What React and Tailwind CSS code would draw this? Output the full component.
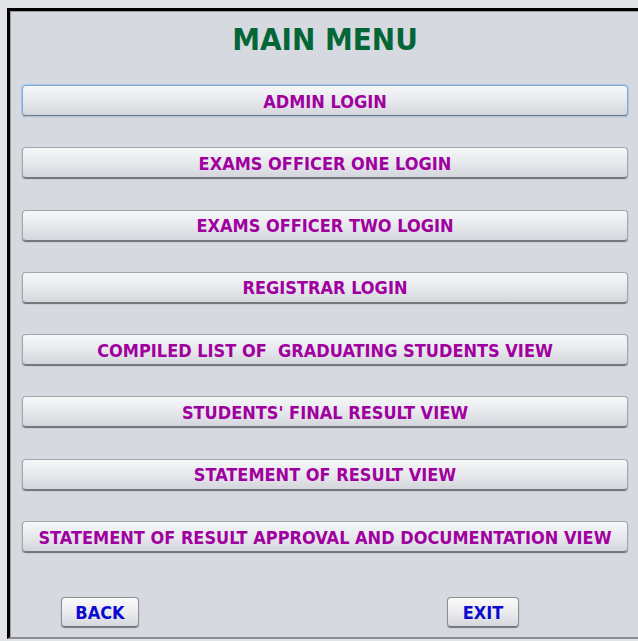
const menuItems = [
  'ADMIN LOGIN',
  'EXAMS OFFICER ONE LOGIN',
  'EXAMS OFFICER TWO LOGIN',
  'REGISTRAR LOGIN',
  'COMPILED LIST OF  GRADUATING STUDENTS VIEW',
  "STUDENTS' FINAL RESULT VIEW",
  'STATEMENT OF RESULT VIEW',
  'STATEMENT OF RESULT APPROVAL AND DOCUMENTATION VIEW',
];

const font = { fontFamily: '"DejaVu Sans Condensed", "DejaVu Sans", sans-serif' };

function MenuButton({ label, focused }) {
  return (
    <button
      className={`h-[31px] w-[606px] rounded-[4px] border border-b-[#75777b] bg-gradient-to-b from-[#f6f7f9] via-[#e8e9ed] to-[#d3d6dc] pt-[2px] text-[18px] leading-[20px] font-bold text-[#a0009f] shadow-[0_1px_1px_rgba(0,0,0,0.5)] whitespace-pre ${
        focused ? 'border-[#7fa9d8] ring-1 ring-[#a9c6e8]' : 'border-[#a4a6aa]'
      }`}
      style={font}
    >
      {label}
    </button>
  );
}

function SmallButton({ label, width }) {
  return (
    <button
      className={`h-[30px] ${width} rounded-[4px] border border-[#8d8f93] border-b-[#6f7175] bg-gradient-to-b from-[#fafafb] via-[#ececef] to-[#d6d8dd] pt-[1px] text-[18px] leading-[20px] font-bold text-[#0a0ad0] shadow-[0_1px_1px_rgba(0,0,0,0.45)]`}
      style={font}
    >
      {label}
    </button>
  );
}

export default function App() {
  return (
    <div className="h-[641px] w-[638px] overflow-hidden bg-[#e1e3e7] pl-[7px] pt-[8px]">
      <div className="h-[631px] w-[660px] border-l-[3px] border-t-[3px] border-b-[2px] border-black border-b-[#8c8d90] bg-[#d6d9df]">
        <div className="h-full border-l border-t border-[#9a9ca0] pl-[11px]">
          <h1
            className="pt-[8px] text-center text-[31px] font-bold leading-[38px] text-[#046636] w-[606px]"
            style={font}
          >
            MAIN MENU
          </h1>
          <div className="mt-[27px] flex flex-col gap-[31.3px]">
            {menuItems.map((item, i) => (
              <MenuButton key={item} label={item} focused={i === 0} />
            ))}
          </div>
          <div className="mt-[45px] flex w-[606px] pl-[39px]">
            <SmallButton label="BACK" width="w-[78px]" />
            <div className="ml-[308px]">
              <SmallButton label="EXIT" width="w-[72px]" />
            </div>
          </div>
        </div>
      </div>
    </div>
  );
}
